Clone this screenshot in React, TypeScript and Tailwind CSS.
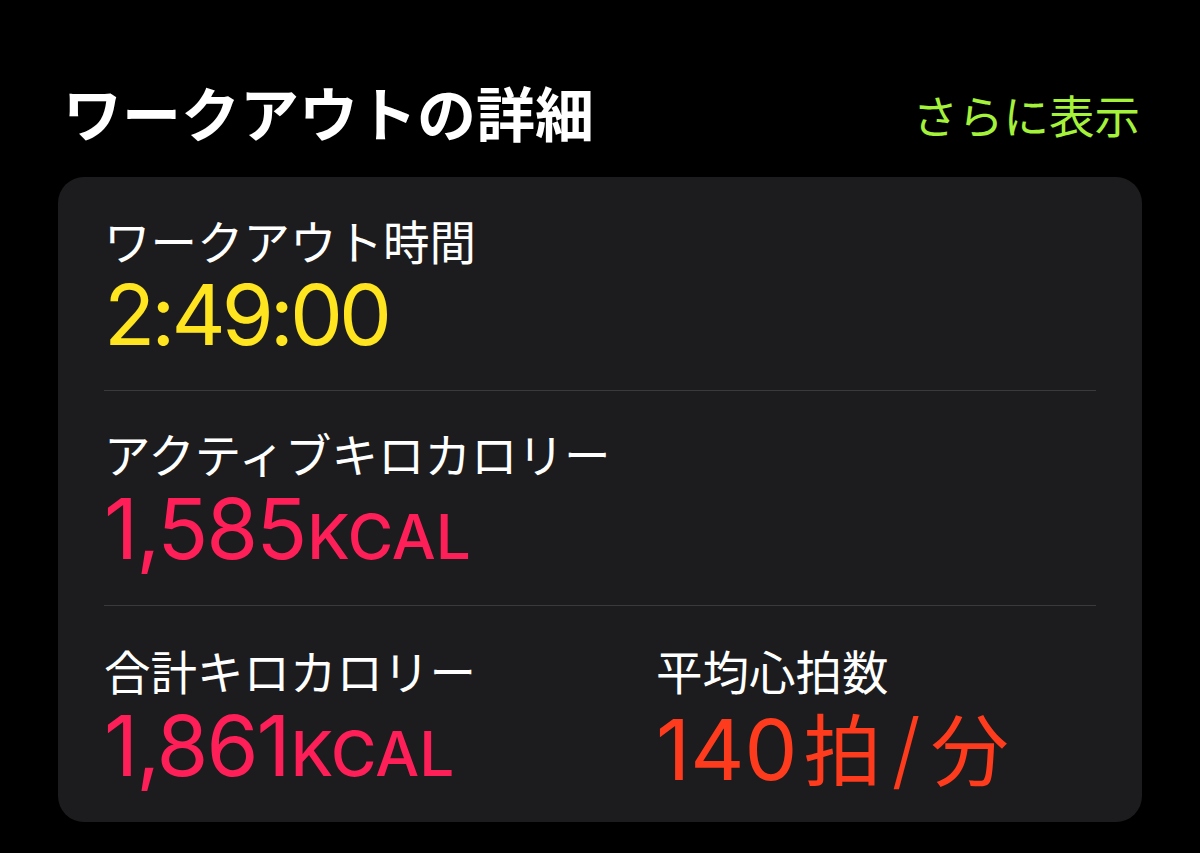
import React from "react";

const JP = { fontFamily: '"Noto Sans CJK JP", "Noto Sans", sans-serif' };
const NUM = { fontFamily: 'Inter, "Noto Sans CJK JP", sans-serif' };

function Label({ children }: { children: React.ReactNode }) {
  return (
    <div className="text-[46.5px] leading-[52px] text-white" style={JP}>
      {children}
    </div>
  );
}

function Kcal({ value }: { value: string }) {
  return (
    <div className="mt-[8px] flex items-baseline text-[#ff1f58]" style={NUM}>
      <span className="text-[84px] leading-[84px] font-normal tracking-[-2px]">{value}</span>
      <span className="ml-[2px] text-[62px] leading-[84px] font-medium">KCAL</span>
    </div>
  );
}

export default function App() {
  return (
    <div className="w-[1200px] h-[853px] bg-black overflow-hidden">
      <div className="flex items-center justify-between pl-[63px] pr-[60px] pt-[82px] h-[177px] pb-[36px]">
        <div className="text-[59px] leading-[60px] font-bold text-white" style={JP}>
          ワークアウトの詳細
        </div>
        <div className="text-[45.5px] leading-[52px] text-[#a4f23a] mt-[4px]" style={JP}>
          さらに表示
        </div>
      </div>
      <div className="mx-[58px] w-[1084px] h-[645px] rounded-[26px] bg-[#1c1c1e] px-[46px] flex flex-col">
        <div className="h-[214px] pt-[37px] border-b border-[#3a3a3c] flex flex-col">
          <Label>ワークアウト時間</Label>
          <div className="mt-[7px] text-[84px] leading-[84px] text-[#ffe51f] tracking-[-4px]" style={NUM}>
            2:49:00
          </div>
        </div>
        <div className="h-[215px] pt-[36px] border-b border-[#3a3a3c] flex flex-col">
          <Label>アクティブキロカロリー</Label>
          <Kcal value="1,585" />
        </div>
        <div className="flex-1 pt-[38px] grid grid-cols-[552px_1fr]">
          <div className="flex flex-col">
            <Label>合計キロカロリー</Label>
            <Kcal value="1,861" />
          </div>
          <div className="flex flex-col">
            <Label>平均心拍数</Label>
            <div className="mt-[8px] flex items-baseline text-[#ff3b1e] text-[84px] leading-[84px]" style={NUM}>
              <span className="tracking-[0px]">140</span>
              <span className="ml-[6px] text-[78px]" style={JP}>拍</span>
              <span className="ml-[10px] font-light">/</span>
              <span className="ml-[10px] text-[78px]" style={JP}>分</span>
            </div>
          </div>
        </div>
      </div>
    </div>
  );
}
